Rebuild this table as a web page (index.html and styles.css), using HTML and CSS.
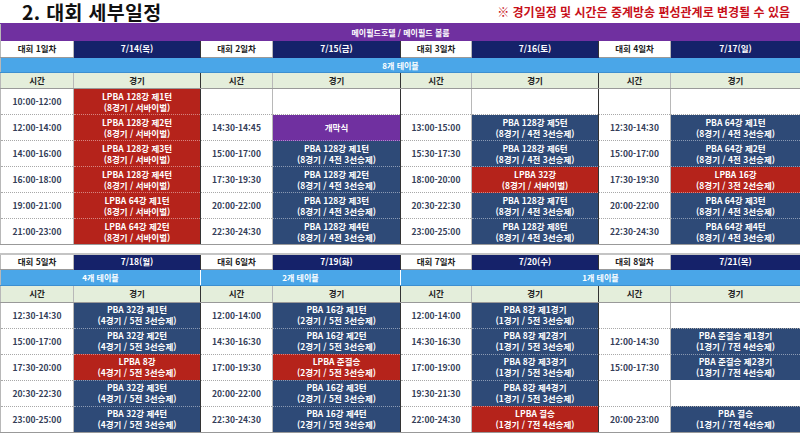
FILE: index.html
```html
<!DOCTYPE html>
<html lang="ko">
<head>
<meta charset="utf-8">
<title>대회 세부일정</title>
<link rel="stylesheet" href="styles.css">
</head>
<body>
<div class="title-bar">
  <h1 class="title">2. 대회 세부일정</h1>
  <div class="note">※ 경기일정 및 시간은 중계방송 편성관계로 변경될 수 있음</div>
</div>

<table class="sched s1">
  <colgroup>
    <col class="c-t1"><col class="c-g1"><col class="c-t2"><col class="c-g2"><col class="c-t3"><col class="c-g3"><col class="c-t4"><col class="c-g4">
  </colgroup>
  <tr class="r-venue"><td colspan="8" class="venue">메이필드호텔 / 메이필드 볼룸</td></tr>
  <tr class="r-day">
    <td class="day">대회 1일차</td><td class="date sep">7/14(목)</td>
    <td class="day">대회 2일차</td><td class="date sep">7/15(금)</td>
    <td class="day">대회 3일차</td><td class="date sep">7/16(토)</td>
    <td class="day">대회 4일차</td><td class="date">7/17(일)</td>
  </tr>
  <tr class="r-tables"><td colspan="8" class="tables">8개 테이블</td></tr>
  <tr class="r-head">
    <td class="head">시간</td><td class="head sep">경기</td>
    <td class="head">시간</td><td class="head sep">경기</td>
    <td class="head">시간</td><td class="head sep">경기</td>
    <td class="head">시간</td><td class="head">경기</td>
  </tr>
  <tr class="r-data">
    <td class="time">10:00-12:00</td><td class="game red sep">LPBA 128강 제1턴<br>(8경기 / 서바이벌)</td>
    <td class="time"></td><td class="empty sep"></td>
    <td class="time"></td><td class="empty sep"></td>
    <td class="time"></td><td class="empty"></td>
  </tr>
  <tr class="r-data">
    <td class="time">12:00-14:00</td><td class="game red sep">LPBA 128강 제2턴<br>(8경기 / 서바이벌)</td>
    <td class="time">14:30-14:45</td><td class="game purple sep">개막식</td>
    <td class="time">13:00-15:00</td><td class="game blue sep">PBA 128강 제5턴<br>(8경기 / 4전 3선승제)</td>
    <td class="time">12:30-14:30</td><td class="game blue">PBA 64강 제1턴<br>(8경기 / 4전 3선승제)</td>
  </tr>
  <tr class="r-data">
    <td class="time">14:00-16:00</td><td class="game red sep">LPBA 128강 제3턴<br>(8경기 / 서바이벌)</td>
    <td class="time">15:00-17:00</td><td class="game blue sep">PBA 128강 제1턴<br>(8경기 / 4전 3선승제)</td>
    <td class="time">15:30-17:30</td><td class="game blue sep">PBA 128강 제6턴<br>(8경기 / 4전 3선승제)</td>
    <td class="time">15:00-17:00</td><td class="game blue">PBA 64강 제2턴<br>(8경기 / 4전 3선승제)</td>
  </tr>
  <tr class="r-data">
    <td class="time">16:00-18:00</td><td class="game red sep">LPBA 128강 제4턴<br>(8경기 / 서바이벌)</td>
    <td class="time">17:30-19:30</td><td class="game blue sep">PBA 128강 제2턴<br>(8경기 / 4전 3선승제)</td>
    <td class="time">18:00-20:00</td><td class="game red sep">LPBA 32강<br>(8경기 / 서바이벌)</td>
    <td class="time">17:30-19:30</td><td class="game red">LPBA 16강<br>(8경기 / 3전 2선승제)</td>
  </tr>
  <tr class="r-data">
    <td class="time">19:00-21:00</td><td class="game red sep">LPBA 64강 제1턴<br>(8경기 / 서바이벌)</td>
    <td class="time">20:00-22:00</td><td class="game blue sep">PBA 128강 제3턴<br>(8경기 / 4전 3선승제)</td>
    <td class="time">20:30-22:30</td><td class="game blue sep">PBA 128강 제7턴<br>(8경기 / 4전 3선승제)</td>
    <td class="time">20:00-22:00</td><td class="game blue">PBA 64강 제3턴<br>(8경기 / 4전 3선승제)</td>
  </tr>
  <tr class="r-data last">
    <td class="time">21:00-23:00</td><td class="game red sep">LPBA 64강 제2턴<br>(8경기 / 서바이벌)</td>
    <td class="time">22:30-24:30</td><td class="game blue sep">PBA 128강 제4턴<br>(8경기 / 4전 3선승제)</td>
    <td class="time">23:00-25:00</td><td class="game blue sep">PBA 128강 제8턴<br>(8경기 / 4전 3선승제)</td>
    <td class="time">22:30-24:30</td><td class="game blue">PBA 64강 제4턴<br>(8경기 / 4전 3선승제)</td>
  </tr>
</table>

<div class="gap"></div>

<table class="sched s2">
  <colgroup>
    <col class="c-t1"><col class="c-g1"><col class="c-t2"><col class="c-g2"><col class="c-t3"><col class="c-g3"><col class="c-t4"><col class="c-g4">
  </colgroup>
  <tr class="r-day2">
    <td class="day">대회 5일차</td><td class="date sep">7/18(월)</td>
    <td class="day">대회 6일차</td><td class="date sep">7/19(화)</td>
    <td class="day">대회 7일차</td><td class="date sep">7/20(수)</td>
    <td class="day">대회 8일차</td><td class="date">7/21(목)</td>
  </tr>
  <tr class="r-tables2">
    <td colspan="2" class="tables tsep">4개 테이블</td>
    <td colspan="2" class="tables tsep">2개 테이블</td>
    <td colspan="4" class="tables">1개 테이블</td>
  </tr>
  <tr class="r-head2">
    <td class="head">시간</td><td class="head sep">경기</td>
    <td class="head">시간</td><td class="head sep">경기</td>
    <td class="head">시간</td><td class="head sep">경기</td>
    <td class="head">시간</td><td class="head">경기</td>
  </tr>
  <tr class="r-data">
    <td class="time">12:30-14:30</td><td class="game blue sep">PBA 32강 제1턴<br>(4경기 / 5전 3선승제)</td>
    <td class="time">12:00-14:00</td><td class="game blue sep">PBA 16강 제1턴<br>(2경기 / 5전 3선승제)</td>
    <td class="time">12:00-14:00</td><td class="game blue sep">PBA 8강 제1경기<br>(1경기 / 5전 3선승제)</td>
    <td class="time"></td><td class="empty"></td>
  </tr>
  <tr class="r-data">
    <td class="time">15:00-17:00</td><td class="game blue sep">PBA 32강 제2턴<br>(4경기 / 5전 3선승제)</td>
    <td class="time">14:30-16:30</td><td class="game blue sep">PBA 16강 제2턴<br>(2경기 / 5전 3선승제)</td>
    <td class="time">14:30-16:30</td><td class="game blue sep">PBA 8강 제2경기<br>(1경기 / 5전 3선승제)</td>
    <td class="time">12:00-14:30</td><td class="game blue">PBA 준결승 제1경기<br>(1경기 / 7전 4선승제)</td>
  </tr>
  <tr class="r-data">
    <td class="time">17:30-20:00</td><td class="game red sep">LPBA 8강<br>(4경기 / 5전 3선승제)</td>
    <td class="time">17:00-19:30</td><td class="game red sep">LPBA 준결승<br>(2경기 / 5전 3선승제)</td>
    <td class="time">17:00-19:00</td><td class="game blue sep">PBA 8강 제3경기<br>(1경기 / 5전 3선승제)</td>
    <td class="time">15:00-17:30</td><td class="game blue">PBA 준결승 제2경기<br>(1경기 / 7전 4선승제)</td>
  </tr>
  <tr class="r-data">
    <td class="time">20:30-22:30</td><td class="game blue sep">PBA 32강 제3턴<br>(4경기 / 5전 3선승제)</td>
    <td class="time">20:00-22:00</td><td class="game blue sep">PBA 16강 제3턴<br>(2경기 / 5전 3선승제)</td>
    <td class="time">19:30-21:30</td><td class="game blue sep">PBA 8강 제4경기<br>(1경기 / 5전 3선승제)</td>
    <td class="time"></td><td class="empty"></td>
  </tr>
  <tr class="r-data last">
    <td class="time">23:00-25:00</td><td class="game blue sep">PBA 32강 제4턴<br>(4경기 / 5전 3선승제)</td>
    <td class="time">22:30-24:30</td><td class="game blue sep">PBA 16강 제4턴<br>(2경기 / 5전 3선승제)</td>
    <td class="time">22:00-24:30</td><td class="game red sep">LPBA 결승<br>(1경기 / 7전 4선승제)</td>
    <td class="time">20:00-23:00</td><td class="game blue">PBA 결승<br>(1경기 / 7전 4선승제)</td>
  </tr>
</table>
</body>
</html>
```

FILE: styles.css
```css
* { box-sizing: border-box; }

html, body {
  margin: 0;
  padding: 0;
  background: #ffffff;
}

body {
  width: 800px;
  height: 433px;
  overflow: hidden;
  font-family: "Noto Sans CJK KR", "Noto Sans", sans-serif;
  color: #222;
}

.title-bar {
  height: 23px;
  display: flex;
  align-items: flex-end;
  justify-content: space-between;
  padding: 0 10px 0 22px;
}

.title {
  margin: 0;
  font-size: 19.5px;
  line-height: 20px;
  height: 21px;
  font-weight: 700;
  color: #111;
  letter-spacing: 0.3px;
}

.note {
  font-size: 12px;
  font-weight: 700;
  color: #c8101a;
  line-height: 14px;
  align-self: center;
  padding-top: 1px;
}

.sched {
  width: 800px;
  table-layout: fixed;
  border-collapse: collapse;
  font-size: 8.5px;
  font-weight: 700;
  text-align: center;
}

.c-t1 { width: 73px; }
.c-g1 { width: 127px; }
.c-t2 { width: 72px; }
.c-g2 { width: 128px; }
.c-t3 { width: 71px; }
.c-g3 { width: 127px; }
.c-t4 { width: 72px; }
.c-g4 { width: 130px; }

.sched td {
  padding: 0;
  line-height: 11px;
  vertical-align: middle;
  border-left: 1px solid #b8b8b8;
  border-right: 1px solid #b8b8b8;
}

.sched td.sep {
  border-right: 1px solid #333;
}

.r-venue { height: 17px; }
.r-day { height: 17px; }
.r-tables { height: 15px; }
.r-head { height: 16px; }
.r-data { height: 26px; }
.r-day2 { height: 14px; }
.r-tables2 { height: 16px; }
.r-head2 { height: 17px; }

.venue {
  background: #7030a0;
  color: #fff;
  font-size: 8px;
  border-top: 1px solid #7030a0;
}

.day {
  background: #fff;
  color: #1a1a1a;
  font-size: 8.5px;
  border-bottom: 1px solid #999;
}

.date {
  background: #15226a;
  color: #fff;
  font-size: 8.5px;
  border-bottom: 1px solid #15226a;
}

.tables {
  background: #4aa6e8;
  color: #fff;
  font-size: 8px;
  border-bottom: 1px solid #3d8fd0;
}

.sched td.tsep {
  border-right: 1px solid #ffffff;
}

.head {
  background: #e4eedb;
  color: #222;
  font-size: 8.5px;
  border-bottom: 1px solid #999;
}

.time {
  background: #fff;
  color: #343d58;
  font-size: 8.5px;
  border-bottom: 1px dotted #a8a8a8;
}

.empty {
  background: #fff;
  border-bottom: 1px dotted #a8a8a8;
}

.game {
  color: #fff;
  font-size: 8.5px;
  border-bottom: 1px dotted rgba(255, 255, 255, 0.45);
}

.red { background: #b5231b; }
.blue { background: #2e4a77; }
.purple { background: #7030a0; }

.r-data.last td {
  border-bottom: 1px solid #999;
}

.gap {
  height: 10px;
  border-bottom: 2px solid #c4c4c4;
}
```
